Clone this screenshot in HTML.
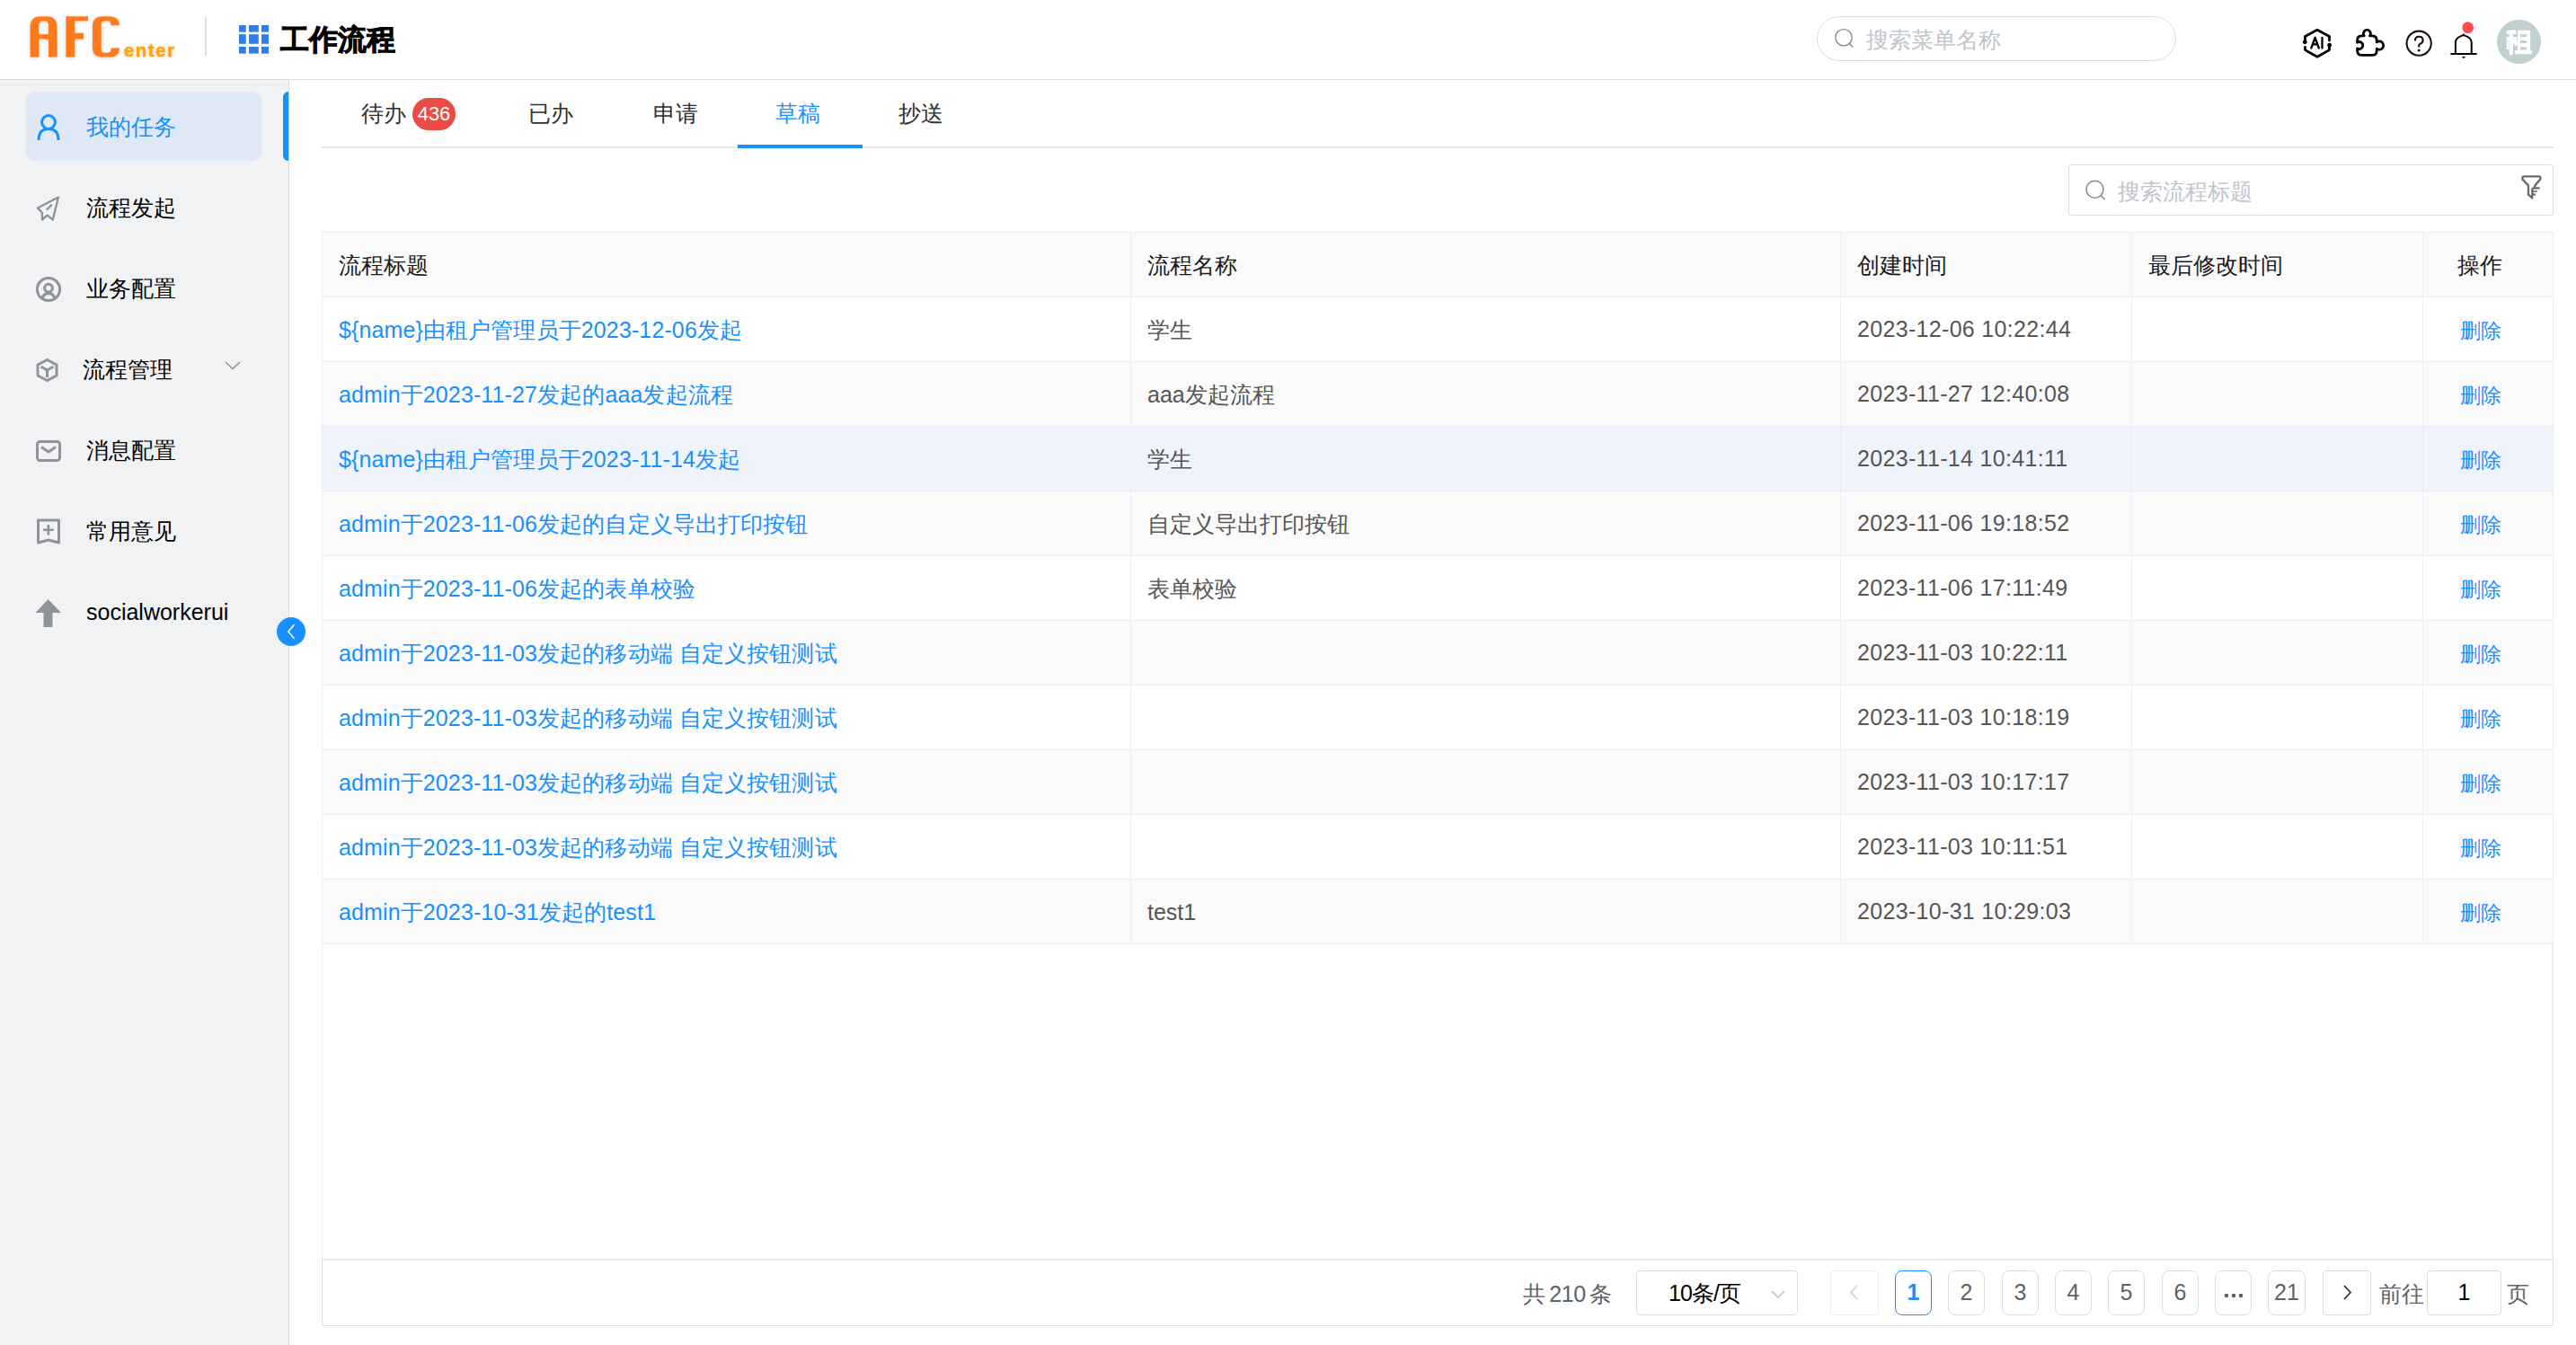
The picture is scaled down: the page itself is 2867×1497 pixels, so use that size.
<!DOCTYPE html>
<html><head><meta charset="utf-8">
<style>
*{margin:0;padding:0;box-sizing:border-box}
html,body{width:2867px;height:1497px;overflow:hidden;background:#fff;font-family:"Liberation Sans",sans-serif;color:#303133}
.abs{position:absolute}
#hdr{position:absolute;left:0;top:0;width:2867px;height:89px;border-bottom:1px solid #dadada;background:#fff}
#side{position:absolute;left:0;top:89px;width:322px;height:1408px;background:#f1f2f4;border-right:1px solid #dcdcdc}
.mi{position:absolute;left:0;width:321px;height:77px}
.mi .t{position:absolute;left:96px;top:0;line-height:77px;font-size:25px;color:#000}
.mi svg{position:absolute}
.tab{position:absolute;top:100px;line-height:52px;font-size:25px;color:#303133}
.row{position:absolute;left:359px;width:2482px;height:72px;border-bottom:1px solid #ebeef5}
.c{position:absolute;top:1px;line-height:71px;font-size:25px;white-space:nowrap}
.c1{left:18px;color:#1890ff;letter-spacing:0.12px}
.c2{left:918px;color:#565656}
.c3{left:1708px;top:0px;color:#565656;letter-spacing:0.32px}
.c5{left:2379px;top:2px;color:#1890ff;font-size:23px}
.vl{position:absolute;top:259px;width:1px;height:792px;background:#ebeef5}
.pg{position:absolute;top:1414px;height:50px;border:1px solid #dcdcdc;border-radius:8px;font-size:25px;line-height:47px;text-align:center;color:#606266;background:#fff}
</style></head><body>
<div id="hdr"></div>
<!-- logo -->
<svg class="abs" style="left:0;top:0" width="220" height="88" viewBox="0 0 220 88">
<defs><filter id="sh" x="-20%" y="-20%" width="140%" height="140%"><feGaussianBlur in="SourceAlpha" stdDeviation="2.2"/><feOffset dx="0" dy="1"/><feComponentTransfer><feFuncA type="linear" slope="0.18"/></feComponentTransfer><feMerge><feMergeNode/><feMergeNode in="SourceGraphic"/></feMerge></filter></defs>
<g filter="url(#sh)">
<path fill="#ff7a1e" d="M33.6 63.6 V30 Q33.6 18.2 45 18.2 H52 Q63.5 18.2 63.5 30 V63.6 H53.9 V43.5 H43.3 V63.6 Z M43.3 38.3 H53.9 V28.5 Q53.9 23.2 49.5 23.2 H47.7 Q43.3 23.2 43.3 28.5 Z"/>
<path fill="#ff7a1e" d="M73.4 63.6 V18.2 H98 V23.2 H83.3 V36.8 H93 V43.5 H83.3 V63.6 Z"/>
<path fill="#ff7a1e" d="M133 28.2 H123.5 V27 Q123.5 23.2 119.5 23.2 H116.5 Q112.7 23.2 112.7 27 V55 Q112.7 58.8 116.5 58.8 H119.5 Q123.5 58.8 123.5 55 V53.5 H133 V53 Q133 63.6 121.5 63.6 H114.5 Q103 63.6 103 53 V29 Q103 18.2 114.5 18.2 H121.5 Q133 18.2 133 29 Z"/>
<text x="137.8" y="63.3" fill="#ffa20a" stroke="#ffa20a" stroke-width="0.5" font-family="Liberation Sans" font-weight="bold" font-size="21" letter-spacing="1.6" textLength="57.6" lengthAdjust="spacingAndGlyphs">enter</text>
</g>
</svg>
<div class="abs" style="left:228px;top:19px;width:2px;height:43px;background:#dcdfe6"></div>
<svg class="abs" style="left:266px;top:28px" width="34" height="32" viewBox="0 0 34 32">
<g fill="#2f7de8">
<rect x="0" y="0" width="7.7" height="7.6"/><rect x="11" y="0" width="10.8" height="7.6"/><rect x="25" y="0" width="8" height="7.6"/>
<rect x="0" y="10.2" width="7.7" height="10.6"/><rect x="11" y="10.2" width="10.8" height="10.6"/><rect x="25" y="10.2" width="8" height="10.6"/>
<rect x="0" y="24" width="7.7" height="7.6"/><rect x="11" y="24" width="10.8" height="7.6"/><rect x="25" y="24" width="8" height="7.6"/>
</g></svg>
<div class="abs" style="left:312px;top:20px;font-size:32px;line-height:48px;font-weight:bold;color:#000;-webkit-text-stroke:0.9px #000">工作流程</div>
<!-- search -->
<div class="abs" style="left:2022px;top:18px;width:400px;height:50px;border:1px solid #dcdcdc;border-radius:25px"></div>
<svg class="abs" style="left:2040px;top:31px" width="24" height="24" viewBox="0 0 24 24"><circle cx="12" cy="10.8" r="9.2" fill="none" stroke="#8a8a8a" stroke-width="1.4"/><path d="M18.3 17.4 L22.2 21.4" stroke="#8a8a8a" stroke-width="1.5"/></svg>
<div class="abs" style="left:2077px;top:24px;font-size:25px;line-height:40px;color:#c0c4cc">搜索菜单名称</div>
<!-- icons -->
<svg class="abs" style="left:2560px;top:28px;overflow:visible" width="40" height="40" viewBox="0 0 40 40">
<g fill="none" stroke="#000" stroke-width="2.8" stroke-linejoin="round" stroke-linecap="round">
<path d="M5.5 18 V12.6 L19 5.2 L32.5 12.6 V17"/><path d="M5.5 24.5 V27.6 L19 35.2 L32.5 27.6 V22.5"/>
</g>
<circle cx="5.3" cy="18.8" r="2.4" fill="#000"/><circle cx="32.6" cy="22.2" r="2.4" fill="#000"/>
<path d="M12.3 25.5 L16.6 13.8 L20.8 25.5 M14 21.4 H19.2 M24.5 13.8 V25.5" fill="none" stroke="#000" stroke-width="2.3" stroke-linecap="round" stroke-linejoin="round"/>
</svg>
<svg class="abs" style="left:2619px;top:28px" width="40" height="40" viewBox="0 0 40 40">
<path fill="none" stroke="#000" stroke-width="2.8" stroke-linejoin="round" d="M9.6 11.85 H12.3 A4 4 0 1 1 18.5 11.85 H21.2 Q26.2 11.85 26.2 16.85 V19 A4.6 4.6 0 1 1 26.2 26.2 V28.4 Q26.2 33.4 21.2 33.4 H9.6 Q4.6 33.4 4.6 28.4 V26 A4 4 0 1 0 4.6 19.2 V16.85 Q4.6 11.85 9.6 11.85 Z"/>
</svg>
<svg class="abs" style="left:2672px;top:28px" width="40" height="40" viewBox="0 0 40 40">
<circle cx="20.2" cy="20.2" r="13.6" fill="none" stroke="#1a1010" stroke-width="2.1"/>
<path fill="none" stroke="#1a1010" stroke-width="2.1" stroke-linecap="butt" d="M15.9 17.4 Q15.9 12.7 20.2 12.7 Q24.6 12.7 24.6 16.8 Q24.6 20 21.4 20.9 Q20.2 21.3 20.2 22.6 V24.4"/>
<circle cx="20.2" cy="28.1" r="1.5" fill="#1a1010"/>
</svg>
<svg class="abs" style="left:2724px;top:28px;overflow:visible" width="40" height="40" viewBox="0 0 40 40">
<path fill="none" stroke="#000" stroke-width="2" d="M8.9 32 V18.6 C9.3 15.4 12.6 12.6 17.8 11.1 C23 12.6 26.3 15.4 26.7 18.6 V32"/>
<path d="M15.9 11.9 L17.8 9 L19.7 11.9 Z" fill="#000"/>
<path d="M4.2 32 H31.8" stroke="#000" stroke-width="2.1" stroke-linecap="round"/>
<path d="M15.9 35 H20 L18 37.2 Z" fill="#000"/>
<circle cx="22.7" cy="2.7" r="6.4" fill="#ff4d4f"/>
</svg>
<svg class="abs" style="left:2779px;top:22px" width="49" height="49" viewBox="0 0 49 49"><circle cx="24.5" cy="24.5" r="24.5" fill="#bfd0d0"/>
<g fill="#fff"><path fill-rule="evenodd" d="M22.9 11.8 H37.2 V34.1 H22.9 Z M26 16.2 V18.9 H32.8 V16.2 Z M26 23.1 V25.9 H32.8 V23.1 Z M26 30.2 V33.6 H32.8 V30.2 Z"/>
<rect x="20" y="34.1" width="19.1" height="4.1"/>
<path d="M10.8 12.6 L17.5 12 L19.5 10.8 L21.2 12.5 L21.9 15.9 H10.8 Z"/>
<rect x="10.8" y="19.1" width="11.1" height="4.1"/>
<rect x="13.7" y="11.5" width="4.3" height="27.7"/>
<path d="M10.8 23.5 H13.7 V33.2 H10.8 Z"/>
<path d="M18 23 H22.9 V27.8 L21 30 L18 26 Z"/>
</g></svg>

<div id="side"></div>
<div class="abs" style="left:29px;top:102px;width:262px;height:77px;border-radius:10px;background:#dee9f5"></div>
<div class="abs" style="left:315px;top:102px;width:6px;height:77px;border-radius:6px 0 0 6px;background:#1890ff"></div>
<svg class="abs" style="left:38px;top:124px" width="34" height="36" viewBox="0 0 34 36">
<g fill="none" stroke="#1890ff" stroke-width="3"><circle cx="16" cy="12" r="7.4"/><path d="M5 32 Q5 19.5 16 19.5 Q27 19.5 27 32"/></g></svg>
<div class="abs" style="left:96px;top:117px;font-size:25px;line-height:48px;color:#1890ff">我的任务</div>

<svg class="abs" style="left:38px;top:215px" width="34" height="34" viewBox="0 0 34 34">
<g fill="none" stroke="#8e929b" stroke-width="2.3" stroke-linejoin="round"><path d="M3.9 16.4 L26.9 4.6 L20.8 29.6 L14.6 24.6 L8.9 29.6 V21.8 Z"/><path d="M13.7 18.8 L19.9 12.6"/></g></svg>
<div class="abs" style="left:96px;top:207px;font-size:25px;line-height:48px;color:#000">流程发起</div>

<svg class="abs" style="left:38px;top:305px" width="34" height="34" viewBox="0 0 34 34">
<g fill="none" stroke="#909399" stroke-width="3"><circle cx="16" cy="17" r="12.6"/><circle cx="16" cy="15.6" r="4.4"/><path d="M9.2 28.2 Q9.6 21.8 16 21.6 Q22.4 21.8 22.8 28.2"/></g></svg>
<div class="abs" style="left:96px;top:297px;font-size:25px;line-height:48px;color:#000">业务配置</div>

<svg class="abs" style="left:36px;top:396px" width="34" height="34" viewBox="0 0 34 34">
<g fill="none" stroke="#909399" stroke-width="3" stroke-linejoin="round"><path d="M16.5 4.5 L27 10 V22 L16.5 27.5 L6 22 V10 Z"/><path d="M9.5 12 L16.5 16 L23.5 12 M16.5 16 V24"/></g></svg>
<div class="abs" style="left:92px;top:387px;font-size:25px;line-height:48px;color:#000">流程管理</div>
<svg class="abs" style="left:248px;top:400px" width="22" height="14" viewBox="0 0 22 14"><path d="M3 3 L11 10.5 L19 3" fill="none" stroke="#909399" stroke-width="1.5"/></svg>

<svg class="abs" style="left:38px;top:485px" width="34" height="34" viewBox="0 0 34 34">
<g fill="none" stroke="#909399" stroke-width="3" stroke-linejoin="round"><rect x="3.5" y="6.5" width="25" height="21" rx="3"/><path d="M8 12.5 L16 18 L24 12.5"/></g></svg>
<div class="abs" style="left:96px;top:477px;font-size:25px;line-height:48px;color:#000">消息配置</div>

<svg class="abs" style="left:38px;top:575px" width="34" height="34" viewBox="0 0 34 34">
<g fill="none" stroke="#909399" stroke-width="3" stroke-linejoin="round"><path d="M4.5 4 H27.5 V29 L16 26 L4.5 29 Z"/><path d="M15.9 9 V20.4 M10.1 14.8 H21.7" stroke-width="2.6"/></g></svg>
<div class="abs" style="left:96px;top:567px;font-size:25px;line-height:48px;color:#000">常用意见</div>

<svg class="abs" style="left:38px;top:665px" width="34" height="34" viewBox="0 0 34 34">
<path fill="#909399" d="M15.5 2 L30 17 H20.5 V33 H10.5 V17 H1.5 Z"/></svg>
<div class="abs" style="left:96px;top:657px;font-size:25px;line-height:48px;color:#000">socialworkerui</div>

<div class="abs" style="left:308px;top:687px;width:32px;height:32px;border-radius:50%;background:#1890ff"></div>
<svg class="abs" style="left:308px;top:687px" width="32" height="32" viewBox="0 0 32 32"><path d="M19.5 8.2 L12.8 16 L19.5 23.8" fill="none" stroke="#fff" stroke-width="1.5"/></svg>

<!--MAIN-->
<div class="tab" style="left:402px">待办</div>
<div class="abs" style="left:459px;top:109px;width:48px;height:36px;border-radius:18px;background:#ea4c45;color:#fff;font-size:22px;line-height:36px;text-align:center">436</div>
<div class="tab" style="left:588px">已办</div>
<div class="tab" style="left:727px">申请</div>
<div class="tab" style="left:863px;color:#1890ff">草稿</div>
<div class="tab" style="left:1000px">抄送</div>
<div class="abs" style="left:358px;top:163px;width:2484px;height:2px;background:#e4e7ed"></div>
<div class="abs" style="left:821px;top:161px;width:139px;height:4px;background:#1890ff"></div>
<div class="abs" style="left:2302px;top:183px;width:540px;height:57px;border:1px solid #dcdcdc;border-radius:4px"></div>
<svg class="abs" style="left:2318px;top:198px" width="28" height="28" viewBox="0 0 28 28"><circle cx="13.5" cy="12.8" r="9.5" fill="none" stroke="#8a8a8a" stroke-width="1.5"/><path d="M20.2 19.6 L24.6 24" stroke="#8a8a8a" stroke-width="1.6"/></svg>
<div class="abs" style="left:2357px;top:192px;font-size:25px;line-height:42px;color:#c0c4cc">搜索流程标题</div>
<svg class="abs" style="left:2802px;top:191px" width="30" height="34" viewBox="0 0 30 34"><g fill="none" stroke="#6a6a6a" stroke-width="2.3" stroke-linejoin="round"><path d="M19 17.5 V16 L25.4 8.2 V6.8 Q25.4 5.3 24 5.3 H7 Q5.4 5.3 5.4 7 V8.6 L12 15.4 V25.6 L16.3 29.5 V18.4"/><path d="M16.3 18.4 H24.6"/><path d="M16.3 22 H21.8" stroke-width="1.7"/><path d="M16.3 25.5 H19.9"/></g></svg>

<div class="abs" style="left:358px;top:258px;width:2484px;height:1145px;border:1px solid #ebeef5;border-right:2px solid #e8edf5;border-bottom:2px solid #e4e9f0"></div>
<div class="abs" style="left:359px;top:259px;width:2482px;height:72px;background:#fafafa;border-bottom:1px solid #ebeef5"></div>
<div class="abs" style="left:377px;top:271px;font-size:25px;line-height:48px;color:#1a1a1a">流程标题</div>
<div class="abs" style="left:1277px;top:271px;font-size:25px;line-height:48px;color:#1a1a1a">流程名称</div>
<div class="abs" style="left:2067px;top:271px;font-size:25px;line-height:48px;color:#1a1a1a">创建时间</div>
<div class="abs" style="left:2391px;top:271px;font-size:25px;line-height:48px;color:#1a1a1a">最后修改时间</div>
<div class="abs" style="left:2735px;top:271px;font-size:25px;line-height:48px;color:#1a1a1a">操作</div>
<div class="row" style="top:331px;background:#fff"><div class="c c1">${name}由租户管理员于2023-12-06发起</div><div class="c c2">学生</div><div class="c c3">2023-12-06 10:22:44</div><div class="c c5">删除</div></div>
<div class="row" style="top:403px;background:#fafafa"><div class="c c1">admin于2023-11-27发起的aaa发起流程</div><div class="c c2">aaa发起流程</div><div class="c c3">2023-11-27 12:40:08</div><div class="c c5">删除</div></div>
<div class="row" style="top:475px;background:#eef3fc"><div class="c c1">${name}由租户管理员于2023-11-14发起</div><div class="c c2">学生</div><div class="c c3">2023-11-14 10:41:11</div><div class="c c5">删除</div></div>
<div class="row" style="top:547px;background:#fafafa"><div class="c c1">admin于2023-11-06发起的自定义导出打印按钮</div><div class="c c2">自定义导出打印按钮</div><div class="c c3">2023-11-06 19:18:52</div><div class="c c5">删除</div></div>
<div class="row" style="top:619px;background:#fff"><div class="c c1">admin于2023-11-06发起的表单校验</div><div class="c c2">表单校验</div><div class="c c3">2023-11-06 17:11:49</div><div class="c c5">删除</div></div>
<div class="row" style="top:691px;background:#fafafa"><div class="c c1">admin于2023-11-03发起的移动端 自定义按钮测试</div><div class="c c2"></div><div class="c c3">2023-11-03 10:22:11</div><div class="c c5">删除</div></div>
<div class="row" style="top:763px;background:#fff"><div class="c c1">admin于2023-11-03发起的移动端 自定义按钮测试</div><div class="c c2"></div><div class="c c3">2023-11-03 10:18:19</div><div class="c c5">删除</div></div>
<div class="row" style="top:835px;background:#fafafa"><div class="c c1">admin于2023-11-03发起的移动端 自定义按钮测试</div><div class="c c2"></div><div class="c c3">2023-11-03 10:17:17</div><div class="c c5">删除</div></div>
<div class="row" style="top:907px;background:#fff"><div class="c c1">admin于2023-11-03发起的移动端 自定义按钮测试</div><div class="c c2"></div><div class="c c3">2023-11-03 10:11:51</div><div class="c c5">删除</div></div>
<div class="row" style="top:979px;background:#fafafa"><div class="c c1">admin于2023-10-31发起的test1</div><div class="c c2">test1</div><div class="c c3">2023-10-31 10:29:03</div><div class="c c5">删除</div></div>
<div class="vl" style="left:1258px"></div>
<div class="vl" style="left:2048px"></div>
<div class="vl" style="left:2372px"></div>
<div class="vl" style="left:2696px"></div>
<div class="abs" style="left:358px;top:1403px;width:2484px;height:73px;border:1px solid #dddddd;border-top:none"></div>
<div class="abs" style="left:1695px;top:1416px;font-size:25px;line-height:48px;color:#606266;word-spacing:-2px;letter-spacing:-0.4px">共 210 条</div>
<div class="abs" style="left:1821px;top:1414px;width:180px;height:50px;border:1px solid #dcdcdc;border-radius:4px"></div>
<div class="abs" style="left:1857px;top:1415px;font-size:25px;line-height:48px;color:#000;letter-spacing:-0.9px">10条/页</div>
<svg class="abs" style="left:1968px;top:1432px" width="22" height="16" viewBox="0 0 22 16"><path d="M4 5 L11 12 L18 5" fill="none" stroke="#c0c4cc" stroke-width="1.6"/></svg>
<div class="pg" style="left:2037px;width:54px;border-color:#ebeef5;border-radius:4px"></div>
<svg class="abs" style="left:2052px;top:1426px" width="24" height="26" viewBox="0 0 24 26"><path d="M15 5 L8 12.5 L15 20" fill="none" stroke="#cdd1d8" stroke-width="1.6"/></svg>
<div class="pg" style="left:2109px;width:41px;border-color:#1890ff;color:#1890ff;font-weight:bold">1</div>
<div class="pg" style="left:2168px;width:41px">2</div>
<div class="pg" style="left:2228px;width:41px">3</div>
<div class="pg" style="left:2287px;width:41px">4</div>
<div class="pg" style="left:2346px;width:41px">5</div>
<div class="pg" style="left:2406px;width:41px">6</div>
<div class="pg" style="left:2465px;width:41px;"><svg width="40" height="47" viewBox="0 0 40 47" style="display:block"><g fill="#606266"><circle cx="12" cy="27" r="2.3"/><circle cx="20" cy="27" r="2.3"/><circle cx="28" cy="27" r="2.3"/></g></svg></div>
<div class="pg" style="left:2524px;width:42px">21</div>
<div class="pg" style="left:2585px;width:54px;border-radius:4px"></div>
<svg class="abs" style="left:2600px;top:1426px" width="24" height="26" viewBox="0 0 24 26"><path d="M9 5 L16 12.5 L9 20" fill="none" stroke="#303133" stroke-width="1.8"/></svg>
<div class="abs" style="left:2648px;top:1416px;font-size:25px;line-height:48px;color:#606266">前往</div>
<div class="abs" style="left:2701px;top:1414px;width:83px;height:50px;border:1px solid #dcdcdc;border-radius:4px;text-align:center;font-size:25px;line-height:47px;color:#000">1</div>
<div class="abs" style="left:2790px;top:1416px;font-size:25px;line-height:48px;color:#606266">页</div>
</body></html>
